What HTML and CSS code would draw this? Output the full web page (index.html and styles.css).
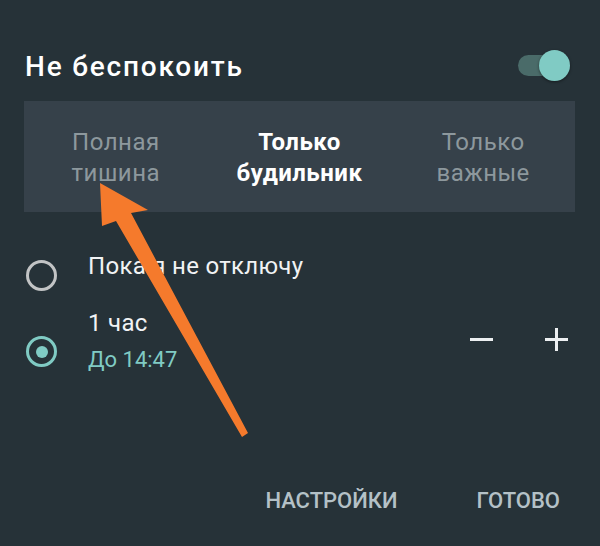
FILE: index.html
```html
<!DOCTYPE html>
<html lang="ru">
<head>
  <meta charset="UTF-8">
  <title>Не беспокоить</title>
  <link rel="stylesheet" href="styles.css">
</head>
<body>

<div class="dialog">
  <div class="header">
    <h2 class="title">Не беспокоить</h2>
    <div class="toggle">
      <span class="track"></span>
      <span class="thumb"></span>
    </div>
  </div>

  <div class="modes">
    <div class="mode">Полная<br>тишина</div>
    <div class="mode active">Только<br>будильник</div>
    <div class="mode">Только<br>важные</div>
  </div>

  <div class="option first">
    <span class="radio"></span>
    <div class="label">Пока я не отключу</div>
  </div>

  <div class="option second">
    <span class="radio checked"></span>
    <div class="label">
      1 час
      <div class="sub">До 14:47</div>
    </div>
    <div class="stepper">
      <span class="minus"></span>
      <span class="plus"></span>
    </div>
  </div>

  <div class="actions">
    <span class="action">НАСТРОЙКИ</span>
    <span class="action">ГОТОВО</span>
  </div>
</div>

<!-- arrow drawn over the dialog -->
<svg class="arrow" width="600" height="546" viewBox="0 0 600 546">
  <polygon fill="#f57a2c" points="100,183 148,210 131,213 248,433 242,437 116,221 102,226"/>
</svg>

</body>
</html>
```

FILE: styles.css
```css
body {
  margin: 0;
  width: 600px;
  height: 546px;
  background: #263238;
  font-family: Roboto, "Noto Sans", sans-serif;
  color: #eceff1;
  position: relative;
  overflow: hidden;
}

.dialog {
  padding: 0 25px 0 24px;
}

.header {
  display: flex;
  justify-content: space-between;
  align-items: flex-start;
  padding-top: 50px;
}

.title {
  margin: 2px 0 0 1px;
  font-size: 28px;
  line-height: 30px;
  letter-spacing: 1.8px;
  font-weight: 500;
  color: #fff;
}

.toggle {
  position: relative;
  width: 52px;
  height: 32px;
  margin-right: 5px;
}

.track {
  position: absolute;
  left: 0;
  top: 5px;
  width: 40px;
  height: 21px;
  border-radius: 11px;
  background: #4a6b69;
}

.thumb {
  position: absolute;
  right: 0;
  top: 0;
  width: 31px;
  height: 31px;
  border-radius: 50%;
  background: #80cbc4;
  box-shadow: 0 1px 3px rgba(0, 0, 0, 0.45);
}

.modes {
  margin-top: 19px;
  height: 111px;
  box-sizing: border-box;
  padding-top: 26px;
  background: #36414a;
  display: grid;
  grid-template-columns: 1fr 1fr 1fr;
}

.mode {
  text-align: center;
  font-size: 24px;
  line-height: 31px;
  letter-spacing: 0.5px;
  color: #8d989d;
}

.mode.active {
  color: #fff;
  font-weight: 700;
}

.option {
  display: flex;
  align-items: flex-start;
}

.option.first {
  margin-top: 41px;
}

.option.second {
  margin-top: 19px;
}

.radio {
  flex: none;
  width: 25px;
  height: 25px;
  border: 3px solid #c2c4c5;
  border-radius: 50%;
  margin: 7px 0 0 2px;
  position: relative;
}

.option.second .radio {
  margin-top: 26px;
}

.radio.checked {
  border-color: #80cbc4;
}

.radio.checked::after {
  content: "";
  position: absolute;
  left: 6.5px;
  top: 6.5px;
  width: 12px;
  height: 12px;
  border-radius: 50%;
  background: #80cbc4;
}

.label {
  margin-left: 31px;
  font-size: 24px;
  line-height: 26px;
  letter-spacing: 0.3px;
  color: #f1f3f4;
}

.sub {
  margin-top: 12px;
  font-size: 22px;
  line-height: 24px;
  letter-spacing: 0;
  color: #80cbc4;
}

.stepper {
  margin: 18px 7px 0 auto;
  display: flex;
  gap: 52px;
}

.minus, .plus {
  position: relative;
  width: 23px;
  height: 23px;
}

.minus::before, .plus::before, .plus::after {
  content: "";
  position: absolute;
  background: #eceff1;
}

.minus::before, .plus::before {
  left: 0;
  top: 10px;
  width: 23px;
  height: 3px;
}

.plus::after {
  left: 10px;
  top: 0;
  width: 3px;
  height: 23px;
}

.actions {
  margin-top: 117px;
  padding-right: 15px;
  display: flex;
  justify-content: flex-end;
  gap: 79px;
}

.action {
  font-size: 22px;
  line-height: 24px;
  font-weight: 500;
  color: #b4c1c7;
}

.arrow {
  position: absolute;
  left: 0;
  top: 0;
  pointer-events: none;
}
```
